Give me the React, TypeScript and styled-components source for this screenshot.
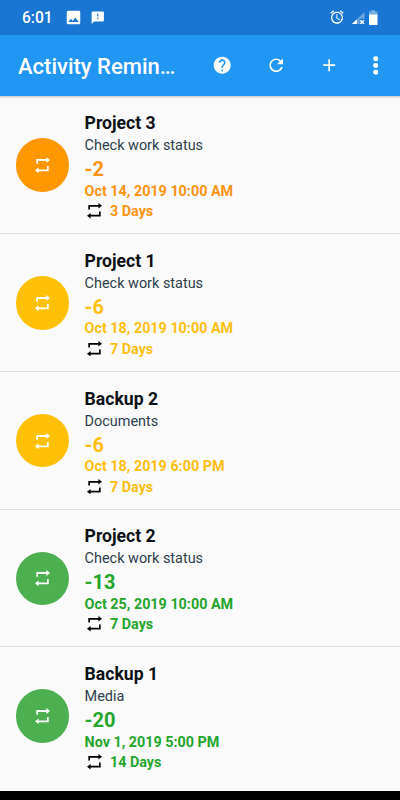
import React from "react";
import styled, { createGlobalStyle } from "styled-components";

const GlobalStyle = createGlobalStyle`
  * { box-sizing: border-box; }
  body { margin: 0; background: #fafafa; font-family: Roboto, sans-serif; }
`;

const Screen = styled.div`
  width: 400px;
  height: 800px;
  display: flex;
  flex-direction: column;
  overflow: hidden;
  background: #fafafa;
`;

const StatusBar = styled.header`
  height: 34.5px;
  flex: none;
  display: flex;
  align-items: center;
  padding: 0 22.5px 0 22px;
  background: #1976d2;
  color: #fff;
`;

const Clock = styled.span`
  width: 43.5px;
  font-size: 15.6px;
  font-weight: 500;
  line-height: 20px;
  padding-top: 2px;
`;

const StatusIcons = styled.div`
  display: flex;
  align-items: center;
  gap: 10.5px;
`;

const SystemIcons = styled(StatusIcons)`
  margin-left: auto;
  gap: 4px;
`;

const Alarm = styled.span`
  margin-right: 3px;
`;

const Glyph = styled.svg<{ $w: number; $h?: number }>`
  display: block;
  flex: none;
  width: ${(p) => p.$w}px;
  height: ${(p) => p.$h ?? p.$w}px;
  fill: currentColor;
`;

const AppBar = styled.div`
  height: 61.7px;
  flex: none;
  display: flex;
  align-items: center;
  padding: 0 13px 0 18px;
  background: #2196f3;
  color: #fff;
  box-shadow: 0 1px 2px rgba(0, 0, 0, 0.25);
  z-index: 1;
`;

const AppTitle = styled.h1`
  margin: 0;
  width: 162px;
  flex: none;
  font-size: 22px;
  font-weight: 500;
  line-height: 28px;
  white-space: nowrap;
  padding-top: 4px;
`;

const Actions = styled.div`
  display: flex;
  flex: 1;
`;

const ActionButton = styled.button<{ $width: number }>`
  width: ${(p) => p.$width}px;
  height: 40px;
  padding: 0;
  border: 0;
  background: none;
  color: inherit;
  display: flex;
  align-items: center;
  justify-content: center;
`;

const List = styled.ul`
  flex: 1;
  min-height: 0;
  margin: 0;
  padding: 0;
  list-style: none;
  overflow: hidden;
`;

const Item = styled.li`
  height: 137.8px;
  display: flex;
  align-items: center;
  padding: 1px 0 0 15.6px;
  gap: 15.4px;
  border-bottom: 1px solid #dedede;

  &:last-child {
    border-bottom-color: transparent;
  }
`;

const Badge = styled.div<{ $color: string }>`
  width: 53.6px;
  height: 53.6px;
  flex: none;
  border-radius: 50%;
  display: flex;
  align-items: center;
  justify-content: center;
  background: ${(p) => p.$color};
  color: #fff;
`;

const Details = styled.div<{ $color: string }>`
  display: flex;
  flex-direction: column;
  padding-top: 3.4px;
  color: ${(p) => p.$color};
  font-weight: 700;
  white-space: nowrap;
`;

const Name = styled.div`
  font-size: 17.6px;
  font-weight: 700;
  line-height: 23px;
  color: #0c1117;
`;

const Note = styled.div`
  font-size: 14.45px;
  font-weight: 400;
  line-height: 22px;
  color: #2d3e4c;
`;

const Count = styled.div`
  font-size: 20px;
  line-height: 24.6px;
`;

const DateLine = styled.div`
  font-size: 14.35px;
  line-height: 20.4px;
`;

const Interval = styled.div`
  display: flex;
  align-items: center;
  gap: 8.2px;
  padding-left: 2.2px;
  font-size: 14.35px;
  line-height: 19.5px;
`;

const IntervalIcon = styled.span`
  color: #000;
  padding-bottom: 2px;
`;

const NavBar = styled.footer`
  height: 9px;
  flex: none;
  background: #000;
`;

const RepeatIcon = ({ height }: { height: number }) => (
  <Glyph $w={15} $h={height} viewBox="0 0 15 15.5" preserveAspectRatio="none">
    <path d="M1.300 1.900H11.400V0L15 2.800 11.400 5.600V3.700H3V6.500H1.300z" />
    <path d="M13.700 13.600H3.600V15.500L0 12.700 3.600 9.900V11.800H12V8.500H13.700z" />
  </Glyph>
);

const items = [
  { name: "Project 3", note: "Check work status", count: "-2", date: "Oct 14, 2019 10:00 AM", every: "3 Days", badge: "#ff9800", text: "#ff9312" },
  { name: "Project 1", note: "Check work status", count: "-6", date: "Oct 18, 2019 10:00 AM", every: "7 Days", badge: "#ffc107", text: "#ffbf10" },
  { name: "Backup 2", note: "Documents", count: "-6", date: "Oct 18, 2019 6:00 PM", every: "7 Days", badge: "#ffc107", text: "#ffbf10" },
  { name: "Project 2", note: "Check work status", count: "-13", date: "Oct 25, 2019 10:00 AM", every: "7 Days", badge: "#4caf50", text: "#24a52b" },
  { name: "Backup 1", note: "Media", count: "-20", date: "Nov 1, 2019 5:00 PM", every: "14 Days", badge: "#4caf50", text: "#24a52b" },
];

export default function App() {
  return (
    <>
      <GlobalStyle />
      <Screen>
        <StatusBar>
          <Clock>6:01</Clock>
          <StatusIcons>
            <Glyph $w={15} viewBox="2 2 20 20">
              <path d="M21 19V5c0-1.100-.9-2-2-2H5c-1.100 0-2 .9-2 2v14c0 1.100.9 2 2 2h14c1.100 0 2-.9 2-2zM8.500 13.500l2.500 3.010L14.500 12l4.500 6H5l3.500-4.500z" />
            </Glyph>
            <Glyph $w={13.500} viewBox="1 1 22 22">
              <path d="M20 2H4c-1.100 0-2 .9-2 2v18l4-4h14c1.100 0 2-.9 2-2V4c0-1.100-.9-2-2-2zm-7 12h-2v-2h2v2zm0-4h-2V5h2v5z" />
            </Glyph>
          </StatusIcons>
          <SystemIcons>
            <Alarm>
              <Glyph $w={16} viewBox="0 0 24 24">
                <path d="M22 5.720l-4.600-3.860-1.290 1.530 4.600 3.860L22 5.720zM7.880 3.390L6.600 1.860 2 5.710l1.290 1.530 4.590-3.850zM12.500 8H11v6l4.750 2.850.75-1.230-4-2.370V8zM12 4c-4.970 0-9 4.030-9 9s4.020 9 9 9c4.970 0 9-4.030 9-9s-4.030-9-9-9zm0 16c-3.870 0-7-3.130-7-7s3.130-7 7-7 7 3.130 7 7-3.130 7-7 7z" />
              </Glyph>
            </Alarm>
            <Glyph $w={13.500} $h={13.500} viewBox="0 0 14 14">
              <path d="M13 1v7H8v5.500H0z" opacity=".35" />
              <path d="M5 8.500v5H0z" />
              <path d="M8.500 9.500l4 4m0-4l-4 4" fill="none" stroke="currentColor" strokeWidth="1.400" />
            </Glyph>
            <Glyph $w={8.500} $h={15.500} viewBox="0 0 9 16">
              <path d="M2.500 0h4v1.500H9V5H0V1.500h2.500z" opacity=".4" />
              <path d="M0 4.500h9V15a.8.8 0 0 1-.8.8H.8A.8.8 0 0 1 0 15z" />
            </Glyph>
          </SystemIcons>
        </StatusBar>
        <AppBar>
          <AppTitle>Activity Remin…</AppTitle>
          <Actions>
            <ActionButton $width={85} aria-label="Help">
              <Glyph $w={20.400} viewBox="0 0 24 24">
                <path d="M12 2C6.480 2 2 6.480 2 12s4.480 10 10 10 10-4.480 10-10S17.520 2 12 2zm1 17h-2v-2h2v2zm2.070-7.750l-.9.920C13.450 12.900 13 13.500 13 15h-2v-.5c0-1.100.45-2.100 1.170-2.830l1.240-1.260c.37-.36.59-.86.59-1.410 0-1.100-.9-2-2-2s-2 .9-2 2H8c0-2.210 1.790-4 4-4s4 1.790 4 4c0 .88-.36 1.680-.93 2.250z" />
              </Glyph>
            </ActionButton>
            <ActionButton $width={22} aria-label="Refresh">
              <Glyph $w={20.400} viewBox="0 0 24 24">
                <path d="M17.650 6.350C16.200 4.900 14.210 4 12 4c-4.420 0-7.990 3.580-7.990 8s3.570 8 7.990 8c3.730 0 6.840-2.550 7.730-6h-2.080c-.82 2.330-3.040 4-5.650 4-3.310 0-6-2.690-6-6s2.690-6 6-6c1.660 0 3.140.69 4.220 1.780L13 11h7V4l-2.350 2.350z" />
              </Glyph>
            </ActionButton>
            <ActionButton $width={84} aria-label="Add">
              <Glyph $w={20.400} viewBox="0 0 24 24">
                <path d="M19 13h-6v6h-2v-6H5v-2h6V5h2v6h6v2z" />
              </Glyph>
            </ActionButton>
            <ActionButton $width={9} aria-label="More options">
              <Glyph $w={5.400} $h={19} viewBox="0 0 5.4 19">
                <circle cx="2.7" cy="2.7" r="2.500" />
                <circle cx="2.7" cy="9.500" r="2.500" />
                <circle cx="2.7" cy="16.300" r="2.500" />
              </Glyph>
            </ActionButton>
          </Actions>
        </AppBar>
        <List>
          {items.map((item) => (
            <Item key={item.name}>
              <Badge $color={item.badge}>
                <RepeatIcon height={16.3} />
              </Badge>
              <Details $color={item.text}>
                <Name>{item.name}</Name>
                <Note>{item.note}</Note>
                <Count>{item.count}</Count>
                <DateLine>{item.date}</DateLine>
                <Interval>
                  <IntervalIcon>
                    <RepeatIcon height={15.5} />
                  </IntervalIcon>
                  {item.every}
                </Interval>
              </Details>
            </Item>
          ))}
        </List>
        <NavBar />
      </Screen>
    </>
  );
}
